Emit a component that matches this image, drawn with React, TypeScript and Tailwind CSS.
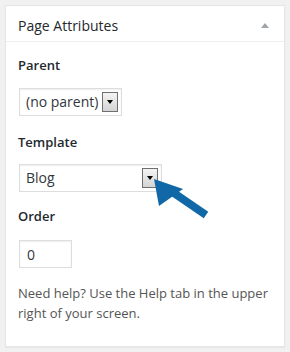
import React from 'react'

// Fake select box that mimics the old-style dropdown with a grey arrow button
function SelectBox({ value, width }: { value: string; width: string }) {
  return (
    <div
      className={`flex h-[28px] items-center justify-between border border-[#dddddd] bg-white pl-[6px] pr-[3px] shadow-[inset_0_1px_2px_rgba(0,0,0,0.07)] ${width}`}
    >
      <span className="text-[14px] leading-none text-[#32373c]">{value}</span>
      <span className="flex h-[20px] w-[16px] items-center justify-center border border-[#6f6f6f] bg-gradient-to-b from-[#f4f4f4] to-[#d4d4d4]">
        <span className="h-0 w-0 border-x-[3.5px] border-t-[4px] border-x-transparent border-t-black" />
      </span>
    </div>
  )
}

export default function App() {
  return (
    <div
      className="relative h-[352px] w-[290px] bg-[#f1f1f1] pl-[5px] pt-[5px]"
      style={{ fontFamily: '"Open Sans", "Noto Sans", sans-serif' }}
    >
      <div className="h-[342px] w-[280px] border border-[#e5e5e5] bg-white shadow-[0_1px_1px_rgba(0,0,0,0.04)]">
        {/* header */}
        <div className="flex h-[36px] items-center justify-between border-b border-[#eeeeee] pl-[12px] pr-[15px] pt-[3px]">
          <h2 className="text-[14px] text-[#23282d]">Page Attributes</h2>
          <span className="h-0 w-0 border-x-[4px] border-b-[5px] border-x-transparent border-b-[#a0a5aa]" />
        </div>

        {/* body */}
        <div className="px-[12px] pt-[14px] text-[13px] text-[#444]">
          <p className="h-[18px] font-semibold leading-[18px] text-[#23282d]">Parent</p>
          <div className="mt-[14px] pl-[1px]">
            <SelectBox value="(no parent)" width="w-[103px]" />
          </div>

          <p className="mt-[17px] h-[18px] font-semibold leading-[18px] text-[#23282d]">Template</p>
          <div className="mt-[13px] pl-[1px]">
            <SelectBox value="Blog" width="w-[143px]" />
          </div>

          <p className="mt-[15px] h-[18px] font-semibold leading-[18px] text-[#23282d]">Order</p>
          <div className="mt-[15px] pl-[1px]">
            <div className="flex h-[28px] w-[53px] items-center border border-[#dddddd] bg-white pl-[7px] text-[14px] text-[#32373c] shadow-[inset_0_1px_2px_rgba(0,0,0,0.07)]">
              0
            </div>
          </div>

          <p className="mt-[15px] leading-[20px] text-[#555]">
            Need help? Use the Help tab in the upper right of your screen.
          </p>
        </div>
      </div>

      {/* annotation arrow pointing at the template dropdown */}
      <svg
        className="absolute left-[150px] top-[174px]"
        width="62"
        height="46"
        viewBox="0 0 62 46"
      >
        <line x1="18" y1="15" x2="56" y2="41" stroke="#1069a6" strokeWidth="8" strokeLinecap="butt" />
        <polygon points="4,5 33,15 9,32" fill="#1069a6" />
      </svg>
    </div>
  )
}
